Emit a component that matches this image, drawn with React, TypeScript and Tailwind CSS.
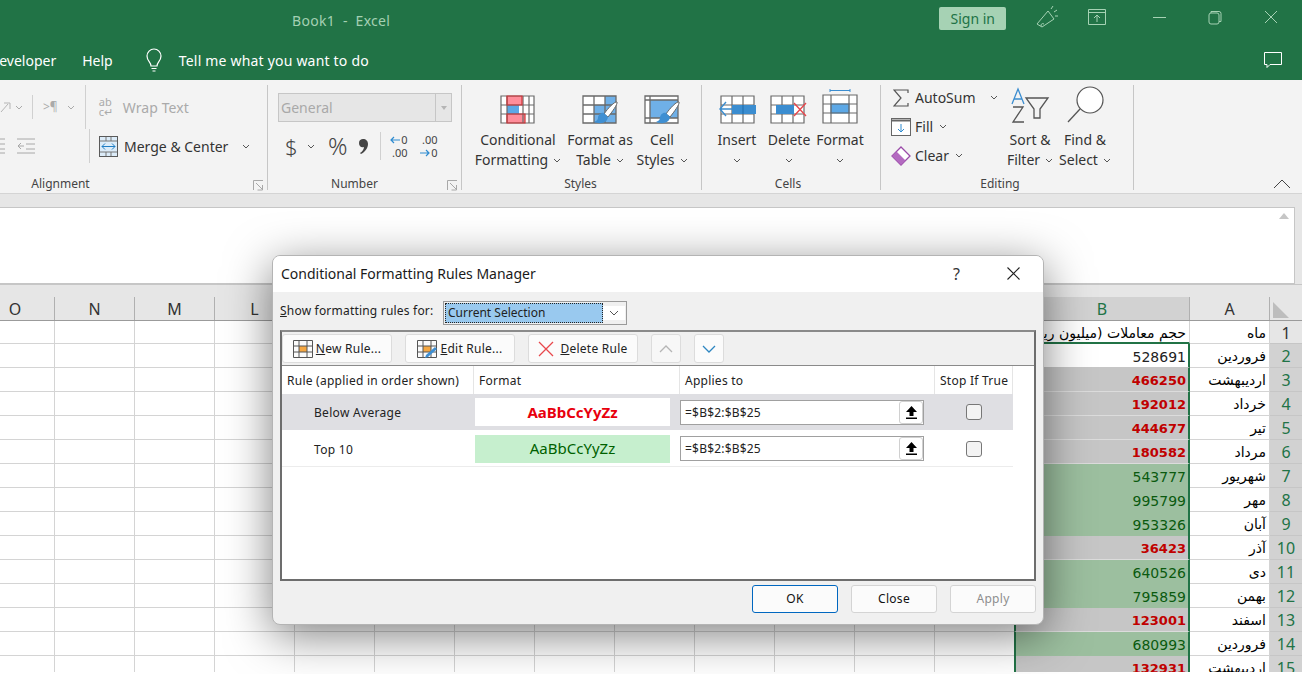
import type { ReactNode } from 'react';

const UI = 'font-["Noto_Sans",sans-serif]';

function Chevron({ className = 'text-[#555]' }: { className?: string }): JSX.Element {
  return (
    <svg width="8" height="5" viewBox="0 0 8 5" className={className} fill="none" stroke="currentColor" strokeWidth="1">
      <path d="M1 1l3 3 3-3" />
    </svg>
  );
}

function Launcher(): JSX.Element {
  return (
    <svg width="11" height="11" viewBox="0 0 11 11" fill="none" stroke="#a8a8a8" strokeWidth="1">
      <path d="M.5 10V.5H10M3 3l6 6M9.500 5v5h-5" />
    </svg>
  );
}

function Brush(): JSX.Element {
  return (
    <g>
      <path d="M35 7c1 2-5 10-9 15l-4-3c4-6 11-13 13-12z" fill="#fff" stroke="#666" strokeWidth="1" />
      <path d="M22 18c-3-1-6 2-6 5 0 2-2 3-4 4 5 2 13 2 14-5z" fill="#3f8fd2" />
    </g>
  );
}

function ConditionalIcon(): JSX.Element {
  return (
    <svg width="36" height="29" viewBox="0 0 36 29" fill="none">
      <rect x="1" y="1" width="33" height="27" fill="#fff" />
      <path d="M7 1h15v9H7zM7 19h18v9H7z" fill="#ff8d9a" />
      <path d="M7 10h12v9H7z" fill="#5ca8e6" />
      <path d="M1 1h33v27H1zM1 10h33M1 19h33M7 1v27M23 1v27M29 1v27" stroke="#6a6a6a" strokeWidth="1.200" />
      <path d="M7 1h15v9H7zM7 19h18v9H7z" stroke="#d13438" strokeWidth="1.200" />
    </svg>
  );
}

function TableIcon(): JSX.Element {
  return (
    <svg width="36" height="29" viewBox="0 0 36 29" fill="none">
      <rect x="1" y="1" width="33" height="27" fill="#fff" />
      <path d="M12 10h22v18H12zM23 1h11v9H23z" fill="#6fb0e8" />
      <path d="M1 1h33v27H1zM1 10h33M1 19h33M12 1v27M23 1v27" stroke="#6a6a6a" strokeWidth="1.300" />
      <Brush />
    </svg>
  );
}

function CellStylesIcon(): JSX.Element {
  return (
    <svg width="36" height="29" viewBox="0 0 36 29" fill="none">
      <rect x="1" y="1" width="33" height="27" fill="#fff" />
      <rect x="6" y="5" width="28" height="18" fill="#6fb0e8" />
      <path d="M1 1h33v27H1zM1 5h33M6 1v27M1 23h33" stroke="#6a6a6a" strokeWidth="1.300" />
      <Brush />
    </svg>
  );
}

function InsertIcon(): JSX.Element {
  return (
    <svg width="38" height="29" viewBox="0 0 38 29" fill="none">
      <rect x="3" y="1" width="33" height="27" fill="#fff" />
      <path d="M3 1h33v27H3zM3 10h33M3 19h33M14 1v27M25 1v27" stroke="#6a6a6a" strokeWidth="1.200" />
      <rect x="14" y="10" width="24" height="9" fill="#3b8dd0" />
      <path d="M8 7l-6 7 6 7M2 14h15" stroke="#3b8dd0" strokeWidth="1.400" />
      <path d="M25 10v9" stroke="#1f6aa8" />
    </svg>
  );
}

function DeleteIcon(): JSX.Element {
  return (
    <svg width="38" height="29" viewBox="0 0 38 29" fill="none">
      <rect x="1" y="1" width="33" height="27" fill="#fff" />
      <path d="M1 1h33v27H1zM1 10h33M1 19h33M12 1v27M23 1v27" stroke="#6a6a6a" strokeWidth="1.200" />
      <rect x="6" y="10" width="18" height="9" fill="#3b8dd0" />
      <path d="M24 8l12 13M36 8L24 21" stroke="#e8474c" strokeWidth="1.400" />
    </svg>
  );
}

function FormatIcon(): JSX.Element {
  return (
    <svg width="36" height="35" viewBox="0 0 36 35" fill="none">
      <path d="M8 1.500h20M8 0v3M28 0v3" stroke="#3b8dd0" />
      <rect x="1" y="6" width="34" height="28" fill="#fff" />
      <rect x="9" y="15" width="18" height="9" fill="#5ca8e6" stroke="#3b8dd0" />
      <path d="M1 6h34v28H1zM1 15h34M1 24h34M9 6v28M27 6v28" stroke="#6a6a6a" strokeWidth="1.200" />
    </svg>
  );
}

function RibbonButton({ icon, lines, width }: { icon: ReactNode; lines: string[]; width: string }): JSX.Element {
  return (
    <div className={`flex flex-col items-center ${width}`}>
      <div className="flex h-[36px] items-end">{icon}</div>
      <div className="mt-[6px] text-center text-[14px] leading-[20px] whitespace-nowrap text-[#333]">{lines[0]}</div>
      <div className="flex h-[20px] items-center gap-[5px] text-[14px] leading-[20px] whitespace-nowrap text-[#333]">
        {lines[1]}
        <Chevron />
      </div>
    </div>
  );
}

function Group({
  label,
  labelClass,
  width,
  children,
}: {
  label: string;
  labelClass: string;
  width: string;
  children: ReactNode;
}): JSX.Element {
  return (
    <div className={`relative flex h-full shrink-0 flex-col border-r border-[#c6c6c6] ${width}`}>
      <div className="h-[91px] shrink-0">{children}</div>
      <div className={`text-center text-[12px] leading-[16px] text-[#444] ${labelClass}`}>{label}</div>
      <div className="absolute right-[3px] bottom-[-1px]">
        {label === 'Alignment' || label === 'Number' ? <Launcher /> : null}
      </div>
    </div>
  );
}

function Ribbon(): JSX.Element {
  return (
    <div className="flex h-[114px] border-b border-[#d4d4d4] bg-[#f3f3f3] pt-[5px] pb-[3px]">
      <Group label="Alignment" labelClass="pr-[146px]" width="w-[268px]">
        <div className="flex h-[44px] items-center text-[#aaa]">
          <svg width="12" height="12" viewBox="0 0 12 12" fill="none" stroke="#b5b5b5"><path d="M1 11L8 3M4 2h6v6" /></svg>
          <span className="ml-[3px]"><Chevron className="text-[#aaa]" /></span>
          <span className="ml-[9px] h-[24px] w-px bg-[#d0d0d0]" />
          <span className="ml-[10px] text-[12px]">{'>¶'}</span>
          <span className="ml-[9px]"><Chevron className="text-[#aaa]" /></span>
          <span className="ml-[10px] h-[44px] w-px bg-[#d0d0d0]" />
          <span className="ml-[13px] w-[20px] text-[11px] leading-[10px]">ab<br />c↵</span>
          <span className="ml-[4px] text-[14px] tracking-[0.1px]">Wrap Text</span>
        </div>
        <div className="flex h-[34px] items-center">
          <svg width="36" height="18" viewBox="0 0 36 18" fill="none" stroke="#a8a8a8">
            <path d="M0 2h5M0 7h5M0 12h5M0 16h5M17 2h18M26 7h9M26 12h9M17 16h18M24 9h-6M21 6l-3 3 3 3" />
          </svg>
          <span className="ml-[53px] h-[34px] w-px bg-[#d0d0d0]" />
          <svg className="ml-[9px]" width="19" height="21" viewBox="0 0 19 21" fill="none">
            <rect x=".5" y=".5" width="18" height="20" fill="#dcecf9" stroke="#5a5a5a" />
            <path d="M1 5h17M1 16h17M7 1v4M12 1v4M7 16v4M12 16v4" stroke="#777" />
            <path d="M3 10.500h13M6 7.500l-3 3 3 3M13 7.500l3 3-3 3" stroke="#1f7dc4" />
          </svg>
          <span className="ml-[6px] text-[14px] text-[#333]">Merge &amp; Center</span>
          <span className="ml-[14px]"><Chevron /></span>
        </div>
      </Group>

      <Group label="Number" labelClass="pr-[20px]" width="w-[194px]">
        <div className="mt-[8px] ml-[10px] flex h-[29px] w-[174px] items-center border border-[#c6c6c6] bg-[#e6e6e6] pl-[2px] text-[14px] text-[#a9a9a9]">
          <span className="flex-1">General</span>
          <span className="flex h-full w-[16px] items-center justify-center border-l border-[#c6c6c6]">
            <svg width="6" height="4" viewBox="0 0 6 4"><path d="M0 0h6L3 4z" fill="#b5b5b5" /></svg>
          </span>
        </div>
        <div className="mt-[6px] flex h-[36px] items-center text-[#444]">
          <span className="ml-[17px] w-[22px] text-[22px] leading-[24px] font-light">$</span>
          <Chevron />
          <span className="ml-[13px] text-[24px] leading-[24px] font-light">%</span>
          <svg className="ml-[11px]" width="9" height="17" viewBox="0 0 9 17" fill="#444">
            <path d="M4 1c3 0 5 2 5 5 0 4-3 8-7 10l-1-1c2-1 4-4 4-6-3 1-5-1-5-4s2-4 4-4z" />
          </svg>
          <span className="ml-[12px] h-[28px] w-px bg-[#d0d0d0]" />
          <div className="ml-[7px] w-[20px] text-[11px] leading-[13px]">
            <div className="flex items-center justify-end gap-[1px]">
              <svg width="10" height="8" viewBox="0 0 10 8" fill="none" stroke="#2e8bd0" strokeWidth="1.200"><path d="M4 1L1 4l3 3M1 4h9" /></svg>
              <span>0</span>
            </div>
            <div className="text-right">.00</div>
          </div>
          <div className="ml-[10px] w-[20px] text-[11px] leading-[13px]">
            <div className="text-right">.00</div>
            <div className="flex items-center justify-end gap-[1px]">
              <svg width="10" height="8" viewBox="0 0 10 8" fill="none" stroke="#2e8bd0" strokeWidth="1.200"><path d="M6 1l3 3-3 3M0 4h9" /></svg>
              <span>0</span>
            </div>
          </div>
        </div>
      </Group>

      <Group label="Styles" labelClass="pr-[2px]" width="w-[240px]">
        <div className="flex pt-[3px] pl-[11px]">
          <RibbonButton icon={<ConditionalIcon />} lines={['Conditional', 'Formatting']} width="w-[90px]" />
          <RibbonButton icon={<TableIcon />} lines={['Format as', 'Table']} width="w-[74px]" />
          <RibbonButton icon={<CellStylesIcon />} lines={['Cell', 'Styles']} width="w-[50px]" />
        </div>
      </Group>

      <Group label="Cells" labelClass="pr-[6px]" width="w-[179px]">
        <div className="flex pt-[3px] pl-[11px]">
          <RibbonButton icon={<InsertIcon />} lines={['Insert', '']} width="w-[48px]" />
          <RibbonButton icon={<DeleteIcon />} lines={['Delete', '']} width="w-[56px]" />
          <RibbonButton icon={<FormatIcon />} lines={['Format', '']} width="w-[46px]" />
        </div>
      </Group>

      <Group label="Editing" labelClass="pr-[14px]" width="w-[253px]">
        <div className="flex pl-[10px]">
          <div className="-mt-[2px] w-[110px] text-[14px] text-[#333]">
            <div className="flex h-[29px] items-center">
              <svg className="mr-[6px] ml-[2px]" width="16" height="18" viewBox="0 0 16 18" fill="none" stroke="#555" strokeWidth="1.200">
                <path d="M15 4V1H1l7 8-7 8h14v-3" />
              </svg>
              <span>AutoSum</span>
              <span className="ml-[14px]"><Chevron /></span>
            </div>
            <div className="flex h-[29px] items-center">
              <svg width="20" height="18" viewBox="0 0 20 18" fill="none">
                <rect x=".5" y=".5" width="19" height="17" fill="#fff" stroke="#666" />
                <path d="M0 2.500h20" stroke="#666" strokeWidth="2" />
                <path d="M10 6v8M7 11l3 3 3-3" stroke="#2e8bd0" />
              </svg>
              <span className="ml-[4px]">Fill</span>
              <span className="ml-[6px]"><Chevron /></span>
            </div>
            <div className="flex h-[29px] items-center">
              <svg width="20" height="20" viewBox="0 0 20 20" fill="none">
                <path d="M10 1l9 9-9 9-9-9z" fill="#fff" stroke="#9a4aa8" strokeWidth="1.300" />
                <path d="M5.500 5.500l9 9L10 19l-9-9z" fill="#b36ac0" />
              </svg>
              <span className="ml-[4px]">Clear</span>
              <span className="ml-[6px]"><Chevron /></span>
            </div>
          </div>
          <div className="flex pt-[3px]">
            <RibbonButton
              width="w-[58px]"
              lines={['Sort &', 'Filter']}
              icon={
                <svg width="40" height="37" viewBox="0 0 40 37" fill="none">
                  <path d="M2 17L8 2l6 15M4 12h8" stroke="#3b8dd0" strokeWidth="1.300" />
                  <path d="M3 20h10L3 35h11" stroke="#555" strokeWidth="1.300" />
                  <path d="M16 11h22l-8 11v9h-6V22z" stroke="#555" strokeWidth="1.300" />
                </svg>
              }
            />
            <RibbonButton
              width="w-[52px]"
              lines={['Find &', 'Select']}
              icon={
                <svg width="40" height="38" viewBox="0 0 40 38" fill="none">
                  <circle cx="25" cy="14" r="13" stroke="#555" strokeWidth="1.200" fill="#fff" />
                  <path d="M15 23L3 36" stroke="#555" strokeWidth="1.300" />
                </svg>
              }
            />
          </div>
        </div>
      </Group>

      <div className="flex flex-1 items-end justify-end pr-[11px] pb-[1px]">
        <svg width="18" height="10" viewBox="0 0 18 10" fill="none" stroke="#444"><path d="M1 9l8-8 8 8" /></svg>
      </div>
    </div>
  );
}

const rows: { month: string; value: string; kind: 'plain' | 'low' | 'top' }[] = [
  { month: 'فروردین', value: '528691', kind: 'plain' },
  { month: 'اردیبهشت', value: '466250', kind: 'low' },
  { month: 'خرداد', value: '192012', kind: 'low' },
  { month: 'تیر', value: '444677', kind: 'low' },
  { month: 'مرداد', value: '180582', kind: 'low' },
  { month: 'شهریور', value: '543777', kind: 'top' },
  { month: 'مهر', value: '995799', kind: 'top' },
  { month: 'آبان', value: '953326', kind: 'top' },
  { month: 'آذر', value: '36423', kind: 'low' },
  { month: 'دی', value: '640526', kind: 'top' },
  { month: 'بهمن', value: '795859', kind: 'top' },
  { month: 'اسفند', value: '123001', kind: 'low' },
  { month: 'فروردین', value: '680993', kind: 'top' },
  { month: 'اردیبهشت', value: '132931', kind: 'low' },
];

const CELL_FONT = 'font-["DejaVu_Sans",sans-serif]';
const emptyCols = Array.from({ length: 12 }, (_, i) => i);

function EmptyCells(): JSX.Element {
  return (
    <>
      <div className="w-[55px] border-r border-b border-[#d4d4d4]" />
      {emptyCols.map((c) => (
        <div key={c} className="w-[80px] border-r border-b border-[#d4d4d4]" />
      ))}
    </>
  );
}

function Sheet(): JSX.Element {
  return (
    <div className="flex flex-col">
      <div className="flex h-[36px] border-t border-[#c6c6c6] bg-[#e6e6e6] pt-[12px]">
        <div className="flex w-[55px] items-center justify-center border-r border-[#b0b0b0] pr-[24px] text-[16px] text-[#333]">O</div>
        {['N', 'M', 'L', '', '', '', '', '', '', '', '', ''].map((c, i) => (
          <div key={i} className="flex w-[80px] items-center justify-center border-r border-[#b0b0b0] text-[16px] text-[#333]">
            {c}
          </div>
        ))}
        <div className="flex w-[175px] items-center justify-center border-r border-[#b0b0b0] bg-[#d2d2d2] text-[16px] text-[#217346]">B</div>
        <div className="flex w-[80px] items-center justify-center border-r border-[#b0b0b0] text-[16px] text-[#333]">A</div>
        <div className="flex flex-1 items-end pb-[2px] pl-[3px]">
          <span className="h-0 w-0 border-t-[16px] border-l-[16px] border-t-transparent border-l-[#bdbdbd]" />
        </div>
      </div>
      <div className={`flex h-[24px] border-t border-[#9b9b9b] ${CELL_FONT}`}>
        <EmptyCells />
        <div className="w-[175px] overflow-hidden border-r border-b-2 border-[#d4d4d4] border-b-[#217346] pr-[3px] text-right text-[14px] leading-[24px] whitespace-nowrap text-black" dir="rtl">
          حجم معاملات (میلیون ریال)
        </div>
        <div className="w-[80px] border-r border-b border-[#d4d4d4] pr-[3px] text-right text-[14px] leading-[24px] text-black" dir="rtl">ماه</div>
        <div className={`flex-1 border-b border-[#c6c6c6] bg-[#e6e6e6] text-center text-[16px] leading-[24px] text-[#333] ${UI}`}>1</div>
      </div>
      {rows.map((row, i) => (
        <div key={i} className={`flex h-[24px] shrink-0 ${CELL_FONT}`}>
          <EmptyCells />
          <div
            className={`-ml-px w-[176px] border-x-2 border-x-[#217346] pr-[2px] text-right leading-[26px] ${
              row.kind === 'plain'
                ? 'border-b border-b-[#c6c6c6] bg-white text-[14px] text-[#222]'
                : row.kind === 'low'
                  ? 'border-b border-b-[#dcdcdc] bg-[#c6c6c6] text-[13px] font-bold text-[#c00000]'
                  : 'bg-[#9cbf9f] text-[14px] text-[#0b5a0f]'
            }`}
          >
            {row.value}
          </div>
          <div className="w-[80px] overflow-hidden border-r border-b border-[#d4d4d4] pr-[3px] text-[14px] leading-[25px] whitespace-nowrap text-black" dir="rtl">
            {row.month}
          </div>
          <div className={`flex-1 border-b border-[#c6c6c6] bg-[#d2d2d2] text-center text-[16px] leading-[25px] text-[#217346] ${UI}`}>
            {i + 2}
          </div>
        </div>
      ))}
    </div>
  );
}

function ToolButton({ icon, label, hot }: { icon: ReactNode; label: string; hot: string }): JSX.Element {
  return (
    <div className="flex h-[29px] w-[110px] items-center justify-center gap-[3px] rounded-[3px] border border-[#dcdcdc] bg-[#fbfbfb] text-[12px] tracking-[0.25px] text-[#222]">
      {icon}
      <span>
        <span className="underline">{hot}</span>
        {label}
      </span>
    </div>
  );
}

function UploadButton(): JSX.Element {
  return (
    <span className="flex h-[23px] w-[24px] items-center justify-center rounded-[3px] border border-[#d0d0d0] bg-white">
      <svg width="13" height="15" viewBox="0 0 13 15" fill="#000">
        <path d="M6.500 1L12 7H8.500v4h-4V7H1zM1 12.500h11V14H1z" />
      </svg>
    </span>
  );
}

function RuleRow({ name, sample, selected }: { name: string; sample: ReactNode; selected?: boolean }): JSX.Element {
  return (
    <div
      className={`grid w-[731px] grid-cols-[192px_206px_255px_78px] items-center ${
        selected ? 'h-[36px] bg-[#dfdfe3]' : 'h-[37px] border-b border-[#ececec] pt-[1px]'
      }`}
    >
      <span className="pt-[2px] pl-[32px] text-[12px] tracking-[0.3px] text-[#222]">{name}</span>
      {sample}
      <div className="flex h-[25px] w-[244px] items-center justify-between border border-[#a0a0a0] bg-white pl-[4px] text-[12px] tracking-[0.2px] text-[#222]">
        <span className="pt-[1px]">=$B$2:$B$25</span>
        <UploadButton />
      </div>
      <span className="mx-auto block h-[16px] w-[16px] rounded-[3px] border border-[#777] bg-[#f3f3f3]" />
    </div>
  );
}

function FooterButton({ label, primary, disabled }: { label: string; primary?: boolean; disabled?: boolean }): JSX.Element {
  return (
    <div
      className={`flex h-[28px] w-[86px] items-center justify-center rounded-[3px] border bg-[#fbfbfb] text-[12px] tracking-[0.3px] ${
        primary ? 'border-[#0067c0]' : 'border-[#d4d4d4]'
      } ${disabled ? 'text-[#8e8e8e]' : 'text-[#111]'}`}
    >
      {label}
    </div>
  );
}

function RulesDialog(): JSX.Element {
  return (
    <div className="absolute top-[255px] left-[272px] flex h-[370px] w-[772px] flex-col overflow-hidden rounded-[8px] border border-[#b4b4b4] bg-[#f0f0f0] shadow-[0_10px_46px_rgba(0,0,0,0.5)]">
      <div className="flex h-[36px] shrink-0 items-center bg-white pr-[23px] pb-[1px] pl-[8px]">
        <span className="flex-1 text-[14px] text-[#1a1a1a]">Conditional Formatting Rules Manager</span>
        <span className="mr-[47px] text-[16px] text-[#333]">?</span>
        <svg width="13" height="13" viewBox="0 0 13 13" fill="none" stroke="#222" strokeWidth="1.100"><path d="M.5.500l12 12M12.500.500l-12 12" /></svg>
      </div>

      <div className="flex h-[38px] shrink-0 items-center pl-[7px] text-[12px] tracking-[0.2px] text-[#222]">
        <span className="w-[163px]"><span className="underline">S</span>how formatting rules for:</span>
        <div className="mt-[3px] flex h-[24px] w-[184px] items-center border border-[#9a9a9a] p-[1px]">
          <span className="flex h-full w-[158px] items-center border border-dotted border-[#222] bg-[#99c9ef] pt-[1px] pl-[2px] tracking-[0px]">Current Selection</span>
          <span className="flex flex-1 items-center justify-center bg-white"><svg width="10" height="14" viewBox="0 0 10 14" fill="none" stroke="#555"><path d="M1 5l4 4 4-4" /></svg></span>
        </div>
      </div>

      <div className="mx-[7px] flex h-[251px] shrink-0 flex-col border-2 border-[#6d6d6d] border-t-[#8a8a8a]">
        <div className="flex h-[34px] shrink-0 items-center gap-[13px] border-b border-[#8a8a8a]">
          <ToolButton
            hot="N"
            label="ew Rule..."
            icon={
              <svg width="20" height="18" viewBox="0 0 20 18" fill="none">
                <rect x="6" y="6" width="8" height="6" fill="#f5a742" />
                <path d="M.5.500h19v17H.5zM.5 6h19M.5 12h19M6 .500v17M14 .500v17" stroke="#555" />
              </svg>
            }
          />
          <ToolButton
            hot="E"
            label="dit Rule..."
            icon={
              <svg width="20" height="18" viewBox="0 0 20 18" fill="none">
                <rect x="6" y="6" width="8" height="6" fill="#f5a742" />
                <path d="M.5.500h19v17H.5zM.5 6h19M.5 12h19M6 .500v17M14 .500v17" stroke="#555" />
                <path d="M18 7l2 2-9 8-3 1 1-3z" fill="#3f8fd2" />
              </svg>
            }
          />
          <ToolButton
            hot="D"
            label="elete Rule"
            icon={
              <svg width="16" height="16" viewBox="0 0 16 16" fill="none" stroke="#e8474c" strokeWidth="1.300" className="mr-[3px]">
                <path d="M1 1l14 14M15 1L1 15" />
              </svg>
            }
          />
          <div className="flex h-[29px] w-[30px] items-center justify-center rounded-[3px] border border-[#dcdcdc] bg-[#f7f7f7]">
            <svg width="14" height="8" viewBox="0 0 14 8" fill="none" stroke="#b5b5b5" strokeWidth="1.300"><path d="M1 7l6-6 6 6" /></svg>
          </div>
          <div className="flex h-[29px] w-[30px] items-center justify-center rounded-[3px] border border-[#dcdcdc] bg-[#fbfbfb]">
            <svg width="14" height="8" viewBox="0 0 14 8" fill="none" stroke="#2e86c1" strokeWidth="1.300"><path d="M1 1l6 6 6-6" /></svg>
          </div>
        </div>
        <div className="flex-1 bg-white">
          <div className="grid h-[28px] w-[731px] grid-cols-[192px_206px_255px_78px] text-[12px] tracking-[0.25px] text-[#222]">
            <span className="flex items-center border-r border-[#e5e5e5] pt-[1px] pl-[5px]">Rule (applied in order shown)</span>
            <span className="flex items-center border-r border-[#e5e5e5] pt-[1px] pl-[5px]">Format</span>
            <span className="flex items-center border-r border-[#e5e5e5] pt-[1px] pl-[5px]">Applies to</span>
            <span className="flex items-center border-r border-[#e5e5e5] pt-[1px] pl-[5px]">Stop If True</span>
          </div>
          <RuleRow
            selected
            name="Below Average"
            sample={
              <span className="ml-[1px] flex h-[28px] w-[195px] items-center justify-center bg-white text-[15px] font-bold text-[#e8000d]">AaBbCcYyZz</span>
            }
          />
          <RuleRow
            name="Top 10"
            sample={
              <span className="ml-[1px] flex h-[28px] w-[195px] items-center justify-center bg-[#c6efce] text-[15px] text-[#006100]">AaBbCcYyZz</span>
            }
          />
        </div>
      </div>

      <div className="flex flex-1 items-start justify-end gap-[13px] pt-[4px] pr-[7px]">
        <FooterButton primary label="OK" />
        <FooterButton label="Close" />
        <FooterButton disabled label="Apply" />
      </div>
    </div>
  );
}

export default function App(): JSX.Element {
  return (
    <div className={`relative h-[674px] w-[1312px] overflow-hidden bg-white ${UI}`}>
      <div className="flex h-[672px] w-[1302px] flex-col overflow-hidden">
        <div className="flex h-[40px] shrink-0 items-center bg-[#217346]">
          <span className="ml-[292px] text-[14px] tracking-[0.3px] whitespace-pre text-[#a4d0b3]">Book1  -  Excel</span>
          <span className="ml-[549px] -mt-[3px] flex h-[23px] w-[67px] items-center justify-center rounded-[2px] bg-[#a6d2b4] text-[14px] text-[#217346]">Sign in</span>
          <svg className="-mt-[6px] ml-[30px]" width="22" height="24" viewBox="0 0 22 24" fill="none" stroke="#a6d2b4">
            <path d="M1 19L12 6l6 8-12 8zM5 21c0-2 1-3 3-2M15 4l2-3M18 7l3-2M19 11h3" />
          </svg>
          <svg className="-mt-[6px] ml-[30px]" width="18" height="16" viewBox="0 0 18 16" fill="none" stroke="#a6d2b4">
            <path d="M.5.500h17v15H.5zM.5 3.500h17M9 13V6M6 9l3-3 3 3" />
          </svg>
          <span className="-mt-[6px] ml-[47px] h-px w-[13px] bg-[#a6d2b4]" />
          <svg className="-mt-[6px] ml-[42px]" width="14" height="15" viewBox="0 0 14 15" fill="none" stroke="#a6d2b4">
            <path d="M3 3V1.500h8q2 0 2 2v8h-2M1 5q0-2 2-2h6q2 0 2 2v7q0 2-2 2H3q-2 0-2-2z" />
          </svg>
          <svg className="-mt-[6px] ml-[42px]" width="14" height="14" viewBox="0 0 14 14" fill="none" stroke="#a6d2b4"><path d="M1 1l12 12M13 1L1 13" /></svg>
        </div>
        <div className="flex h-[40px] shrink-0 items-center bg-[#217346] text-[14px] text-white">
          <span className="-ml-[11px]">Developer</span>
          <span className="ml-[26px]">Help</span>
          <svg className="ml-[32px]" width="18" height="24" viewBox="0 0 18 24" fill="none" stroke="#fff" strokeWidth="1.200">
            <path d="M6 18c0-4-4-5-4-10a7 7 0 0 1 14 0c0 5-4 6-4 10zM6.500 20.500h5M7.500 23h3" />
          </svg>
          <span className="ml-[16px] tracking-[0.2px]">Tell me what you want to do</span>
          <svg className="ml-[894px]" width="20" height="18" viewBox="0 0 20 18" fill="none" stroke="#fff">
            <path d="M1.500 1.500h17v12H7l-3 3v-3H1.500z" />
          </svg>
        </div>

        <Ribbon />

        <div className="flex h-[90px] shrink-0 flex-col bg-[#e6e6e6] pt-[13px] pr-[7px]">
          <div className="relative h-[77px] border-y border-r border-[#c6c6c6] bg-white">
            <svg className="absolute top-[5px] right-[5px]" width="10" height="6" viewBox="0 0 10 6"><path d="M5 0l5 6H0z" fill="#c6c6c6" /></svg>
          </div>
        </div>

        <Sheet />
      </div>

      <RulesDialog />
    </div>
  );
}
